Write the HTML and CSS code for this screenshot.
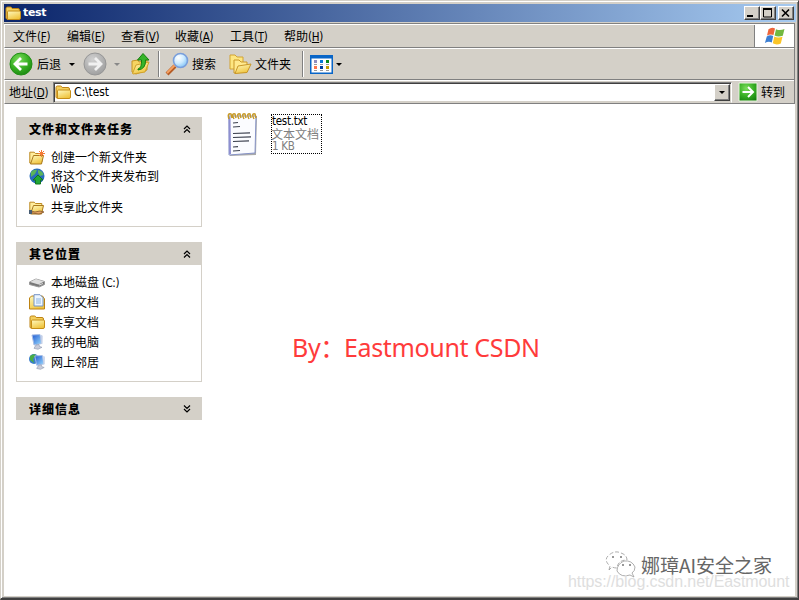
FILE: index.html
```html
<!DOCTYPE html>
<html lang="zh-CN">
<head>
<meta charset="utf-8">
<title>test</title>
<link rel="stylesheet" href="styles.css">
</head>
<body>
<svg class="defs" width="0" height="0" aria-hidden="true">
  <defs>
    <linearGradient id="gold" x1="0" y1="0" x2="0.5" y2="1"><stop offset="0" stop-color="#fffac0"/><stop offset="1" stop-color="#f0c540"/></linearGradient>
    <radialGradient id="green" cx=".4" cy=".3" r=".8"><stop offset="0" stop-color="#7cdc5c"/><stop offset=".55" stop-color="#36ae22"/><stop offset="1" stop-color="#16800e"/></radialGradient>
    <radialGradient id="grey" cx=".4" cy=".3" r=".8"><stop offset="0" stop-color="#d0d0d0"/><stop offset="1" stop-color="#9a9a9a"/></radialGradient>
    <radialGradient id="lens" cx=".35" cy=".3" r=".8"><stop offset="0" stop-color="#fff"/><stop offset=".5" stop-color="#cceaff"/><stop offset="1" stop-color="#76bdf4"/></radialGradient>
    <linearGradient id="screen" x1="0" y1="0" x2="1" y2="1"><stop offset="0" stop-color="#2058d0"/><stop offset="1" stop-color="#9addff"/></linearGradient>
    <symbol id="folder" viewBox="0 0 16 16"><path d="M1 13V3.500q0-1.500 1.500-1.500h3q1 0 1.700 1.500H13q1.500 0 1.500 1.500v8q0 1-1 1H2q-1 0-1-1z" fill="#f4cf5c" stroke="#bd8212"/><path d="M2.500 14.500V7q0-1 1-1h11q1 0 1 1v6q0 1.500-1.500 1.500z" fill="url(#gold)" stroke="#c68e18"/></symbol>
    <symbol id="open" viewBox="0 0 16 16"><path d="M.8 14V3.200h4.400l1.300 1.300h6.300V13z" fill="#ffed9d" stroke="#bd8920"/><path d="M1.500 15L4.500 6.500h10L12.500 15z" fill="url(#gold)" stroke="#aa791c"/></symbol>
    <symbol id="monitor" viewBox="0 0 16 16"><path d="M3 1l8-.5 1.500 9L5 11z" fill="url(#screen)" stroke="#a8bde4"/><path d="M12 .8l1.700 1-.2 8-1.600.5z" fill="#c4d0e8"/><path d="M7 11l3-.5.500 2 2.500.8-4 2-4-1z" fill="#c9ccda" stroke="#8995ad" stroke-width=".6"/></symbol>
    <symbol id="chev" viewBox="0 0 8 8"><path d="M1 4l3-3 3 3M1 7.500l3-3 3 3" fill="none" stroke="#000" stroke-width="1.200"/></symbol>
  </defs>
</svg>
<div class="window">
  <header class="title">
    <svg class="i16"><use href="#folder"/></svg><b>test</b>
    <div class="controls">
      <i class="btn"><svg width="12" height="10"><path d="M1 7h6v2H1z"/></svg></i>
      <i class="btn"><svg width="12" height="10"><path d="M1.500 1v8h8V1M1 1.500h9" fill="none" stroke="#000"/><path d="M1 0h9v2H1z"/></svg></i>
      <i class="btn close"><svg width="12" height="10"><path d="M2 1.500l7 7M9 1.500l-7 7" stroke="#000" stroke-width="1.600"/></svg></i>
    </div>
  </header>
  <div class="bars">
    <nav class="menu">
      <span>文件<em>(<u>F</u>)</em></span><span>编辑<em>(<u>E</u>)</em></span><span>查看<em>(<u>V</u>)</em></span><span>收藏<em>(<u>A</u>)</em></span><span>工具<em>(<u>T</u>)</em></span><span>帮助<em>(<u>H</u>)</em></span>
      <div class="flag"><svg width="20" height="19" viewBox="0 0 20 19"><path d="M3.500 2.200Q7-.4 10 1.500L8.500 8Q5.500 6.500 2 8.600z" fill="#ee653a"/><path d="M11 2.200Q15 4 19.500 2L17.800 8.800Q13 10.500 9.600 8.500z" fill="#72b840"/><path d="M1.800 9.500Q5 7.500 8.200 9L6.800 15.500Q3.500 14-.1 16z" fill="#3b7ed3"/><path d="M9.300 9.600Q13 11.500 17.500 9.800L15.800 16.500Q11.500 18.500 7.800 16.300z" fill="#fac529"/></svg></div>
    </nav>
    <div class="tools">
      <svg class="round" viewBox="0 0 24 24"><circle cx="12" cy="12" r="11" fill="url(#green)" stroke="#218f16"/><path d="M18.500 12H6.500M12 6l-6 6 6 6" fill="none" stroke="#fff" stroke-width="2.800"/></svg>
      <span class="back">后退</span><i class="drop"></i>
      <svg class="round fwd" viewBox="0 0 24 24"><circle cx="12" cy="12" r="11" fill="url(#grey)" stroke="#969696"/><path d="M5.500 12h12M12 6l6 6-6 6" fill="none" stroke="#f1f1f1" stroke-width="2.800"/></svg>
      <i class="drop pale"></i>
      <svg class="up" width="20" height="24" viewBox="0 0 20 24"><path d="M1 20V9l6-1 1 2 8-2v10L5 22z" fill="#f5d462" stroke="#c69324"/><path d="M1.500 21.500L5 13l13-3-4 10-12 2z" fill="url(#gold)" stroke="#d1a22b"/><path d="M7 17q4-1 3.500-9H6.500L12 1.500 18 8h-3.500q.5 9-7.500 10z" fill="#36b42a" stroke="#16800e"/></svg>
      <i class="sep"></i>
      <svg class="search" width="24" height="24" viewBox="0 0 24 24"><path d="M2 22l8-8" stroke="#b55b24" stroke-width="4"/><path d="M2 21l8-8" stroke="#f6a263" stroke-width="2"/><circle cx="15.500" cy="8.500" r="7" fill="url(#lens)" stroke="#799edb" stroke-width="1.600"/></svg>
      <span class="searchtext">搜索</span>
      <svg class="folders" width="23" height="22" viewBox="0 0 23 22"><path d="M1 16V2h5l2 2h6v12z" fill="#fde681" stroke="#d2a333"/><path d="M5 20V7h5l2 2h6v10z" fill="#ffe98e" stroke="#c99728"/><path d="M6 20.500L9 13l13-2-4 8.500z" fill="url(#gold)" stroke="#c99728"/></svg>
      <span class="foldertext">文件夹</span><i class="sep second"></i>
      <svg class="views" width="23" height="19"><path d="M0 0h23v19H0z" fill="#0865c7"/><path d="M1.500 3.500h20v14h-20z" fill="#fff"/><path d="M4 5h3v3H4z" fill="#918fc0"/><path d="M10 5h3v3h-3z" fill="#0878d6"/><path d="M16 5h3v3h-3z" fill="#098b1d"/><path d="M4 11h3v3H4z" fill="#ff754d"/><path d="M10 11h3v3h-3z" fill="#003b9d"/><path d="M16 11h3v3h-3z" fill="#c89b00"/><path d="M4 9.500h3m3 0h3m3 0h3M4 15.500h3m3 0h3m3 0h3" stroke="#999"/></svg>
      <i class="drop"></i>
    </div>
    <div class="address">
      <span class="label">地址<em>(<u>D</u>)</em></span>
      <div class="combo"><svg class="i16"><use href="#folder"/></svg><em>C:\test</em><i class="btn"><i class="drop"></i></i></div>
      <svg class="go" width="18" height="18"><path d="M0 0h18v18H0z" fill="url(#green)" stroke="#e8f3df"/><path d="M3.500 9h10M9 4l5 5-5 5" fill="none" stroke="#fff" stroke-width="2"/></svg><span>转到</span>
    </div>
  </div>
  <main>
    <aside>
      <section class="panel tasks"><h2>文件和文件夹任务<svg><use href="#chev"/></svg></h2><ul>
        <li><svg class="i16"><use href="#open"/><path d="M12.500 1v7M9 4.500h7M10 2l5 5M15 2l-5 5" stroke="#f47a35"/></svg><span>创建一个新文件夹</span></li>
        <li class="two"><svg class="i16" viewBox="0 0 16 16"><circle cx="8" cy="7" r="7.500" fill="#286cbd"/><path d="M2 3q3-3 6-2l-2 4-4 3zM9 1q5 1 5.500 5L11 7 9 4z" fill="#5bb45a"/><path d="M9 6l5 5h-2.500v4h-5v-4H4z" fill="#22a735" stroke="#107420"/></svg><span>将这个文件夹发布到<br><em>Web</em></span></li>
        <li><svg class="i16" viewBox="0 0 16 16"><use href="#open"/><path d="M2 12l4 1 5-1 4 1-5 2-7-1z" fill="#e5a465" stroke="#85552b" stroke-width=".8"/><path d="M0 11h3v4H0z" fill="#475c72"/></svg><span>共享此文件夹</span></li>
      </ul></section>
      <section class="panel places"><h2>其它位置<svg><use href="#chev"/></svg></h2><ul>
        <li><svg class="i16" viewBox="0 0 16 16"><path d="M.5 8L7 5l8.500 2.500v3L10 13 .5 10.500z" fill="#777" stroke="#999"/><path d="M1 8l6-3 8 2.500-5.500 3z" fill="#dedede"/><path d="M10 11l4-1.500" stroke="#ddd"/></svg><span>本地磁盘 <em>(C:)</em></span></li>
        <li><svg class="i16" viewBox="0 0 16 16"><path d="M.5 4l2-2h11l2 3v10H.5z" fill="url(#gold)" stroke="#bd8212"/><path d="M5 .7h6l3 3V12H5z" fill="#edf6ff" stroke="#7393c5"/><path d="M7 5h5M7 7h5M7 9h5" stroke="#8ab3e1"/></svg><span>我的文档</span></li>
        <li><svg class="i16"><use href="#folder"/></svg><span>共享文档</span></li>
        <li><svg class="i16"><use href="#monitor"/></svg><span>我的电脑</span></li>
        <li><svg class="i16" viewBox="0 0 16 16"><circle cx="5" cy="5" r="5" fill="#397dcc"/><path d="M1 2q4-3 6-1L4 5l1 4-4-3z" fill="#48ad45"/><use href="#monitor" x="3" y="1" width="15" height="15"/></svg><span>网上邻居</span></li>
      </ul></section>
      <section class="panel details"><h2>详细信息<svg class="down"><use href="#chev"/></svg></h2></section>
    </aside>
    <div class="file">
      <svg width="32" height="44" viewBox="0 0 32 44"><path d="M3 5l27-1-1 39-26 1z" fill="#aaa"/><path d="M2 4h27l-1 37-26 2z" fill="#fbfcff" stroke="#8794c8"/><path d="M2.500 5l.5 37" stroke="#8e8fd0" stroke-width="2"/><path d="M2 7Q0 1 4 2l1 4M7 7Q4 1 8 2l1 4M12 7Q9 1 13 2l1 4M17 7Q14 1 18 2l1 4M22 7Q19 1 23 2l1 4M27 7Q24 1 28 2l1 4" fill="none" stroke="#c79a28" stroke-width="1.500"/><path d="M6 11l5-.5M6 15l7-.5M6 21.500l17-.7M6 25.500l18-.7M6 29.500l16-.7M6 35l5-.3M6 39l7-.5" stroke="#3d4250" stroke-width="1.200"/></svg>
      <div class="name"><em>test.txt</em><span>文本文档</span><em class="muted">1 KB</em></div>
    </div>
    <div class="byline">By：<span>Eastmount CSDN</span></div>
    <div class="brand"><svg width="32" height="28" viewBox="0 0 32 28"><g fill="#fff" stroke="#999" stroke-width=".8"><path d="M4 19l1-4Q-2 9 4 4t12-2q6 2 6 7-9 0-10 8-3 0-5-1z" stroke-dasharray="4 2"/><path d="M29 26l-4-2q-9 3-13-4 0-7 7-10 8-1 11 6 0 4-3 6z"/></g><path d="M7 6h2m6 0h2m0 8h2m5 0h2" stroke="#777" stroke-width="1.500"/></svg><span>娜璋AI安全之家</span></div>
    <div class="url">https://blog.csdn.net/Eastmount</div>
  </main>
</div>
</body>
</html>
```

FILE: styles.css
```css
* { box-sizing: border-box; }
body { margin: 0; overflow: hidden; font: 12px/14px "Noto Sans CJK SC", sans-serif; color: #000; }
.defs { position: absolute; }
svg { display: block; flex: none; overflow: visible; }
em { font: 11.5px/13px "DejaVu Sans Condensed", "DejaVu Sans", sans-serif; letter-spacing: -.3px; }
u { text-underline-offset: 1px; text-decoration-thickness: 1px; }
span { white-space: nowrap; }
.i16 { width: 16px; height: 16px; }
.window { width: 799px; height: 600px; display: flex; flex-direction: column; background: #d4d0c8; padding: 2px 2px 1px 2px; border: 1px solid #d4d0c8; border-right-color: #404040; border-bottom: 2px solid #404040; box-shadow: inset 1px 1px #fff, inset -1px -1px #808080; }
.title { flex: none; margin: 1px 0 0 1px; height: 18px; display: flex; align-items: center; padding-left: 1px; color: #fff; background: linear-gradient(90deg, #0a246a, #a6caf0); }
.title b { font: bold 11px/16px "DejaVu Sans", sans-serif; margin-left: 2px; letter-spacing: -.3px; }
.controls { display: flex; margin-left: auto; margin-right: 2px; }
.btn { display: flex; align-items: center; justify-content: center; width: 16px; height: 14px; background: #d4d0c8; border: 1px solid; border-color: #fff #404040 #404040 #fff; box-shadow: inset -1px -1px #808080; }
.close { margin-left: 2px; }
.bars { flex: none; height: 81px; border-top: 1px solid #808080; margin: 1px 1px 0 1px; border-right: 1px solid #808080; }
.menu { height: 24px; display: flex; align-items: center; padding-left: 8px; border-top: 1px solid #fff; border-left: 1px solid #fff; border-bottom: 1px solid #808080; }
.menu > span { width: 54px; }
.menu > span:nth-child(4) { width: 55px; }
.flag { width: 40px; height: 22px; margin-left: auto; background: #fff; border-left: 1px solid #808080; display: flex; align-items: center; justify-content: center; }
.tools { height: 32px; display: flex; align-items: center; border-top: 1px solid #fff; border-left: 1px solid #fff; border-bottom: 1px solid #808080; padding-left: 4px; }
.round { width: 24px; height: 24px; }
.back { margin-left: 4px; width: 32px; }
.drop { width: 0; height: 0; border: 3px solid transparent; border-top-color: #000; border-bottom: 0; flex: none; }
.pale { border-top-color: #888; margin-left: 7px; }
.fwd { margin-left: 8px; }
.up { margin-left: 11px; }
.sep { width: 2px; height: 26px; background: #808080; border-right: 1px solid #fff; margin-left: 7px; }
.search { margin-left: 5px; }
.searchtext { margin-left: 3px; }
.folders { margin-left: 13px; }
.foldertext { margin-left: 3px; }
.second { margin-left: 11px; }
.views { margin-left: 6px; margin-right: 3px; }
.address { height: 24px; display: flex; align-items: center; border: solid #fff; border-width: 1px 0 0 1px; border-bottom: 1px solid #808080; padding-left: 4px; }
.label { width: 44px; }
.combo { width: 679px; height: 21px; background: #fff; border: 1px solid; border-color: #808080 #fff #d4d0c8 #808080; box-shadow: inset 1px 1px #404040, inset -1px -1px #d4d0c8; display: flex; align-items: center; padding: 1px 1px; }
.combo em { margin: 1px 0 0 3px; font-size: 12px; letter-spacing: -.1px; }
.combo .btn { margin-left: auto; height: 17px; }
.go { margin-left: 7px; margin-right: 4px; }
main { flex: 1; margin: 0 1px 1px 1px; background: #fff; display: grid; grid-template-columns: 222px 1fr; position: relative; min-height: 0; }
aside { padding: 13px 0 0 12px; }
.panel { width: 186px; border: 1px solid #d4d0c8; margin-bottom: 15px; }
.panel h2 { margin: 0; height: 22px; background: #d4d0c8; padding: 0 10px 0 12px; font-size: 12px; font-weight: 900; letter-spacing: 1px; line-height: 22px; display: flex; align-items: center; justify-content: space-between; }
.panel h2 svg { width: 8px; height: 8px; }
.down { transform: rotate(180deg); }
.panel ul { list-style: none; margin: 0; padding: 8px 0 0 12px; }
.panel li { display: flex; height: 20px; line-height: 17px; }
.panel li > svg { margin-top: 1px; }
.panel li > span { margin-left: 6px; }
.panel .two { height: 30px; line-height: 14px; }
.two > span { padding-top: 1px; }
.two em { display: block; line-height: 13px; }
.tasks { height: 110px; }
.places { height: 140px; }
.details { height: 23px; margin: 0; }
.file { display: flex; align-items: flex-start; padding: 8px 0 0 1px; }
.name { margin: 2px 0 0 12px; width: 51px; height: 40px; border: 1px dotted #000; display: flex; flex-direction: column; line-height: 12px; padding-top: 0; }
.name span, .muted { color: #808080; }
.name span { margin-left: -1px; }
.byline { position: absolute; left: 288px; top: 226px; color: #ff3b3b; font: 25px/34px "Noto Sans", "Noto Sans CJK SC", sans-serif; letter-spacing: -.35px; white-space: nowrap; display: flex; }
.byline span { margin-left: -1px; }
.brand { position: absolute; left: 601px; top: 447px; display: flex; align-items: center; font-size: 19px; line-height: 28px; color: #666; }
.brand span { margin-left: 4px; text-shadow: -1px -1px #fff; }
.url { position: absolute; left: 564px; top: 469px; color: #dedede; font: 16px/18px "Liberation Sans", sans-serif; letter-spacing: -.09px; white-space: nowrap; }
```
